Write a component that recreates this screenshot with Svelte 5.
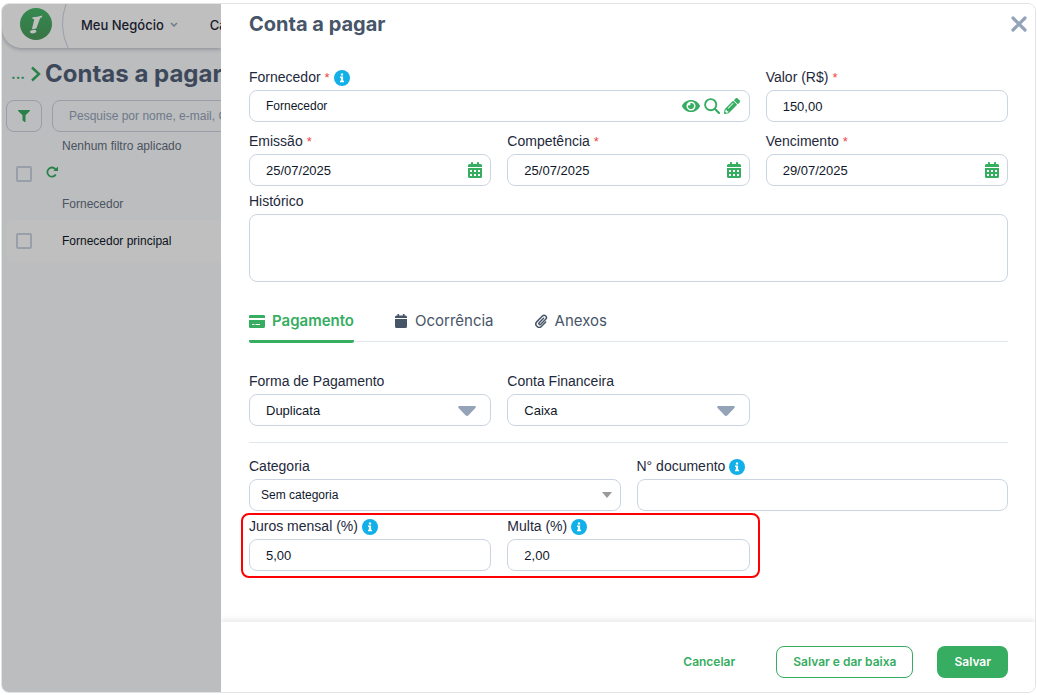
<script lang="ts">
  // Accounts payable: the list page sits dimmed on the left, the
  // edit drawer for one bill covers the rest.

  let supplier = $state('Fornecedor');
  let amount = $state('150,00');
  let history = $state('');
  let method = $state('Duplicata');
  let account = $state('Caixa');
  let category = $state('Sem categoria');
  let docNumber = $state('');
  let interest = $state('5,00');
  let fine = $state('2,00');

  let dates = $state([
    { id: 'issue', label: 'Emissão', value: '25/07/2025' },
    { id: 'accrual', label: 'Competência', value: '25/07/2025' },
    { id: 'due', label: 'Vencimento', value: '29/07/2025' },
  ]);

  const tabs = ['Pagamento', 'Ocorrência', 'Anexos'];
  let tab = $state('Pagamento');
</script>

{#snippet info()}
  <svg class="info" viewBox="0 0 16 16" aria-hidden="true">
    <circle cx="8" cy="8" r="8" fill="#12b0e8" />
    <path d="M6.9 3.4h2.2v2H6.9zM6 6.5h3.1v4.2H10v1.6H6v-1.6h.9V8.1H6z" fill="#fff" />
  </svg>
{/snippet}

{#snippet caret()}
  <svg class="caret" viewBox="0 0 18 10" aria-hidden="true">
    <path d="M1.5 0h15c1.200 0 1.700 1.200.9 2L10.500 9.200c-.9.9-2.100.9-3 0L.6 2C-.2 1.200.3 0 1.500 0z" fill="#94a3b8" />
  </svg>
{/snippet}

<div class="frame">
  <div class="page">
    <nav class="nav">
      <svg class="nav__logo" viewBox="0 0 32 32" aria-hidden="true">
        <defs>
          <linearGradient id="logo" x1="0" y1="0" x2="0" y2="1">
            <stop offset="0" stop-color="#46b96b" />
            <stop offset="1" stop-color="#4d9a5c" />
          </linearGradient>
        </defs>
        <circle cx="16" cy="16" r="16" fill="url(#logo)" />
        <path d="M12.500 9.300q4.500-.3 9.900-1.800l-.6 2-1.600.6-3.900 10.300-4.400.8 2.400-9.900-1.900-.6z" fill="#fff" />
        <ellipse cx="13.200" cy="23.600" rx="3.200" ry="1.700" fill="#fff" transform="rotate(-8 13.200 23.600)" />
      </svg>
      <svg class="nav__curve" viewBox="0 0 8 44" aria-hidden="true">
        <path d="M5 0Q-3 22 7 44" fill="none" stroke="#cbd5e1" />
      </svg>
      <a class="nav__link" href="#negocio">
        Meu Negócio
        <svg width="8" height="6" viewBox="0 0 8 6" aria-hidden="true">
          <path d="M1 1l3 3 3-3" fill="none" stroke="#94a3b8" stroke-width="1.500" />
        </svg>
      </a>
      <a class="nav__link" href="#cadastros">Cadastros</a>
    </nav>

    <div class="crumbs">
      <a class="crumbs__more" href="#inicio">...</a>
      <svg width="10" height="16" viewBox="0 0 10 16" aria-hidden="true">
        <path d="M1 1.500l7 6.500-7 6.500" fill="none" stroke="#36ad61" stroke-width="2.400" />
      </svg>
      <h1>Contas a pagar</h1>
    </div>

    <div class="search">
      <button type="button" class="search__filter" aria-label="Filtrar">
        <svg width="12" height="12" viewBox="0 0 512 512" aria-hidden="true">
          <path fill="currentColor" d="M487.976 0H24.028C2.710 0-8.047 25.866 7.058 40.971L192 225.941V432c0 7.831 3.821 15.170 10.237 19.662l80 55.980C298.020 518.690 320 507.493 320 487.980V225.941l184.947-184.970C520.021 25.896 509.338 0 487.976 0z" />
        </svg>
      </button>
      <input class="search__input" type="text" aria-label="Pesquisar" placeholder="Pesquise por nome, e-mail, CNPJ" />
    </div>
    <p class="filters">Nenhum filtro aplicado</p>

    <div class="tools">
      <input type="checkbox" aria-label="Selecionar todos" />
      <button type="button" class="tools__reload" aria-label="Atualizar">
        <svg width="12" height="12" viewBox="0 0 12 12" aria-hidden="true">
          <path d="M9.600 3.300A4.600 4.600 0 1 0 9.800 8.600" fill="none" stroke="currentColor" stroke-width="1.800" />
          <path d="M12 .4v4.700H7.300z" fill="currentColor" />
        </svg>
      </button>
    </div>
    <div class="list-head">Fornecedor</div>
    <div class="list-row">
      <input type="checkbox" id="row-1" />
      <label for="row-1">Fornecedor principal</label>
    </div>
  </div>

  <section class="drawer" aria-label="Conta a pagar">
    <header class="drawer__head">
      <h2>Conta a pagar</h2>
      <button type="button" class="close" aria-label="Fechar">
        <svg width="16" height="16" viewBox="0 0 16 16" aria-hidden="true">
          <path d="M2 2l12 12M14 2L2 14" stroke="#94a3b8" stroke-width="3.200" stroke-linecap="round" />
        </svg>
      </button>
    </header>

    <form class="form" onsubmit={(e) => e.preventDefault()}>
      <div class="grid">
        <div class="field field--wide">
          <label for="supplier">Fornecedor <em>*</em> {@render info()}</label>
          <div class="control control--small">
            <input id="supplier" type="text" bind:value={supplier} />
            <button type="button" class="icon" aria-label="Ver">
              <svg width="18" height="16" viewBox="0 0 576 512" aria-hidden="true">
                <path fill="currentColor" d="M572.520 241.400C518.290 135.590 410.930 64 288 64S57.680 135.640 3.480 241.410a32.350 32.350 0 0 0 0 29.190C57.710 376.410 165.070 448 288 448s230.320-71.640 284.520-177.410a32.350 32.350 0 0 0 0-29.190zM288 400a144 144 0 1 1 144-144 143.930 143.930 0 0 1-144 144zm0-240a95.310 95.310 0 0 0-25.310 3.790 47.850 47.850 0 0 1-66.900 66.900A95.780 95.780 0 1 0 288 160z" />
              </svg>
            </button>
            <button type="button" class="icon" aria-label="Procurar">
              <svg width="16" height="16" viewBox="0 0 16 16" aria-hidden="true">
                <path d="M10.800 10.800L15 15" stroke="currentColor" stroke-width="2.200" stroke-linecap="round" />
                <circle cx="6.700" cy="6.700" r="5.600" fill="none" stroke="currentColor" stroke-width="1.900" />
              </svg>
            </button>
            <button type="button" class="icon" aria-label="Editar">
              <svg width="16" height="16" viewBox="0 0 512 512" aria-hidden="true">
                <path fill="currentColor" d="M497.900 142.100l-46.100 46.100c-4.700 4.700-12.300 4.700-17 0l-111-111c-4.700-4.700-4.700-12.300 0-17l46.100-46.100c18.700-18.700 49.100-18.700 67.900 0l60.100 60.100c18.800 18.700 18.800 49.100 0 67.900zM284.200 99.800L21.600 362.400.4 483.900c-2.900 16.400 11.400 30.600 27.800 27.800l121.500-21.300 262.600-262.600c4.700-4.700 4.700-12.300 0-17l-111-111c-4.800-4.700-12.400-4.700-17.100 0zM124.100 339.900c-5.500-5.500-5.500-14.300 0-19.800l154-154c5.500-5.500 14.300-5.500 19.800 0s5.500 14.300 0 19.800l-154 154c-5.500 5.500-14.300 5.500-19.800 0zM88 424h48v36.300l-64.500 11.300-31.100-31.100L51.700 376H88v48z" />
              </svg>
            </button>
          </div>
        </div>
        <div class="field">
          <label for="amount">Valor (R$) <em>*</em></label>
          <div class="control"><input id="amount" type="text" bind:value={amount} /></div>
        </div>

        {#each dates as date (date.id)}
          <div class="field">
            <label for={date.id}>{date.label} <em>*</em></label>
            <div class="control">
              <input id={date.id} type="text" bind:value={date.value} />
              <button type="button" class="icon" aria-label="Abrir calendário">
                <svg width="14" height="16" viewBox="0 0 14 16" aria-hidden="true">
                  <path fill="currentColor" fill-rule="evenodd" d="M0 6h14v8.500Q14 16 12.500 16h-11Q0 16 0 14.500zM2 8v2h2V8zM6 8v2h2V8zM10 8v2h2V8zM2 12v2h2v-2zM6 12v2h2v-2zM10 12v2h2v-2zM3 .8Q3 0 3.800 0h.4Q5 0 5 .8V2h4V.8Q9 0 9.800 0h.4Q11 0 11 .8V2h1.500Q14 2 14 3.500V5H0V3.500Q0 2 1.500 2H3z" />
                </svg>
              </button>
            </div>
          </div>
        {/each}
      </div>

      <div class="field field--history">
        <label for="history">Histórico</label>
        <textarea id="history" bind:value={history}></textarea>
      </div>

      <div class="tabs" role="tablist">
        {#each tabs as name (name)}
          <button
            type="button"
            role="tab"
            class="tab"
            class:tab--active={tab === name}
            aria-selected={tab === name}
            onclick={() => (tab = name)}
          >
            {#if name === 'Pagamento'}
              <svg width="16" height="14" viewBox="0 0 16 14" aria-hidden="true">
                <path fill="currentColor" fill-rule="evenodd" d="M1.200 1h13.600Q16 1 16 2.200V4H0V2.200Q0 1 1.200 1zM0 6h16v6.300Q16 14 14.800 14H1.200Q0 14 0 12.800zM3 10v1h2.500v-1zM6.500 10v1H11v-1z" />
              </svg>
            {:else if name === 'Ocorrência'}
              <svg width="14" height="14" viewBox="0 0 14 14" aria-hidden="true">
                <path fill="currentColor" d="M1 5h12v7.500Q13 14 11.500 14h-9Q1 14 1 12.500zM3.500 0h1.600v1.500h3.800V0h1.600v1.500h1Q13 1.500 13 3v1H1V3q0-1.500 1.500-1.500h1z" />
              </svg>
            {:else}
              <svg width="14" height="14" viewBox="0 0 14 14" aria-hidden="true">
                <path
                  d="M9.600 4.200L5.200 8.700a1.100 1.100 0 0 0 1.600 1.600l4.900-5A2.300 2.300 0 0 0 8.400 2L2.900 7.600a3.300 3.300 0 0 0 4.700 4.700l4.100-4.200"
                  fill="none"
                  stroke="currentColor"
                  stroke-width="1.500"
                  stroke-linecap="round"
                />
              </svg>
            {/if}
            {name}
          </button>
        {/each}
      </div>

      <div class="grid grid--payment">
        <div class="field">
          <label for="method">Forma de Pagamento</label>
          <div class="select">
            <select id="method" bind:value={method}>
              <option>Duplicata</option>
            </select>
            {@render caret()}
          </div>
        </div>
        <div class="field">
          <label for="account">Conta Financeira</label>
          <div class="select">
            <select id="account" bind:value={account}>
              <option>Caixa</option>
            </select>
            {@render caret()}
          </div>
        </div>
      </div>

      <hr />

      <div class="grid grid--halves">
        <div class="field">
          <label for="category">Categoria</label>
          <div class="select select--small">
            <select id="category" bind:value={category}>
              <option>Sem categoria</option>
            </select>
            <svg class="caret" viewBox="0 0 10 6" aria-hidden="true">
              <path d="M0 0h10L5 6z" fill="#999" />
            </svg>
          </div>
        </div>
        <div class="field">
          <label for="document">N° documento {@render info()}</label>
          <div class="control"><input id="document" type="text" bind:value={docNumber} /></div>
        </div>
      </div>

      <div class="grid grid--charges">
        <div class="charges">
          <div class="field">
            <label for="interest">Juros mensal (%) {@render info()}</label>
            <div class="control"><input id="interest" type="text" bind:value={interest} /></div>
          </div>
          <div class="field">
            <label for="fine">Multa (%) {@render info()}</label>
            <div class="control"><input id="fine" type="text" bind:value={fine} /></div>
          </div>
        </div>
      </div>
    </form>

    <footer class="drawer__foot">
      <button type="button" class="btn btn--text">Cancelar</button>
      <button type="button" class="btn btn--outline">Salvar e dar baixa</button>
      <button type="button" class="btn btn--solid">Salvar</button>
    </footer>
  </section>
</div>

<style>
  :global(body) {
    background: #fff;
  }

  .frame {
    --green: #36ad61;
    --line: #cbd5e1;
    --slate: #475569;
    --display: Inter, 'Open Sans', sans-serif;
    display: flex;
    box-sizing: border-box;
    min-height: calc(100vh - 5px);
    margin: 3px 1px 2px;
    border: 1px solid #e2e3e4;
    border-radius: 8px;
    overflow: hidden;
    font-family: 'Liberation Sans', Arial, sans-serif;
    font-size: 12px;
    color: #0f172a;
  }

  button,
  input,
  select,
  textarea {
    box-sizing: border-box;
    margin: 0;
    font: inherit;
    color: inherit;
  }
  button {
    padding: 0;
    background: none;
    border: 0;
    cursor: pointer;
  }
  svg {
    flex: none;
    display: block;
  }

  .page {
    position: relative;
    flex: none;
    width: 219px;
    overflow: hidden;
    background: #fafcff;
  }
  /* backdrop over the list page */
  .page::after {
    content: '';
    position: absolute;
    inset: 0;
    background: rgba(0, 0, 0, 0.25);
  }

  .nav {
    display: flex;
    align-items: center;
    height: 44px;
    padding-left: 18px;
    background: #fff;
    border-bottom-left-radius: 20px;
    box-shadow: 0 1px 4px rgba(15, 23, 42, 0.3);
  }
  .nav__logo {
    width: 32px;
    height: 32px;
    margin-top: -4px;
  }
  .nav__curve {
    width: 8px;
    height: 44px;
    margin: 0 12px 0 9px;
  }
  .nav__link {
    display: flex;
    align-items: center;
    gap: 6px;
    margin: -3px 32px 0 0;
    font: 500 13px/20px var(--display);
    color: #1e293b;
    text-decoration: none;
    white-space: nowrap;
  }

  .crumbs {
    display: flex;
    align-items: center;
    gap: 4px;
    height: 52px;
    padding-left: 9px;
    white-space: nowrap;
  }
  .crumbs__more {
    margin-right: 2px;
    font: 700 14px/20px var(--display);
    color: var(--green);
    text-decoration: none;
  }
  h1 {
    margin: 0;
    font: 700 24px/32px var(--display);
    color: #52627a;
  }

  .search {
    display: flex;
    gap: 10px;
    padding-left: 4px;
  }
  .search__filter {
    display: grid;
    flex: none;
    place-items: center;
    width: 36px;
    height: 32px;
    color: var(--green);
    border: 1px solid #cbd5e1;
    border-radius: 8px;
  }
  .search__input {
    flex: none;
    width: 320px;
    height: 32px;
    padding: 0 16px;
    background: none;
    border: 1px solid #cbd5e1;
    border-radius: 8px;
  }
  .search__input::placeholder {
    color: #94a3b8;
    opacity: 1;
  }
  .filters {
    margin: 0 0 0 60px;
    line-height: 28px;
    color: #667080;
  }

  .tools {
    display: flex;
    align-items: center;
    gap: 14px;
    height: 28px;
    padding-left: 14px;
  }
  .tools__reload {
    padding-bottom: 4px;
    color: var(--green);
  }
  input[type='checkbox'] {
    appearance: none;
    width: 16px;
    height: 16px;
    border: 2px solid #cbd5e1;
    border-radius: 2px;
  }
  .list-head {
    padding-left: 60px;
    line-height: 32px;
    color: #667080;
  }
  .list-row {
    display: flex;
    align-items: center;
    gap: 30px;
    height: 42px;
    margin-left: 4px;
    padding-left: 10px;
    background: #fff;
    border-radius: 8px 0 0 8px;
  }

  .drawer {
    display: flex;
    flex: 1;
    flex-direction: column;
    min-width: 0;
    background: #fff;
  }
  .drawer__head {
    display: flex;
    align-items: center;
    justify-content: space-between;
    height: 40px;
    padding: 0 8px 0 28px;
  }
  h2 {
    margin: 0;
    font: 700 20px/32px var(--display);
    color: var(--slate);
  }

  .form {
    flex: 1;
    padding: 22px 27px 24px 28px;
  }
  .grid {
    display: grid;
    grid-template-columns: repeat(3, 1fr);
    gap: 8px 16px;
  }
  .field {
    min-width: 0;
  }
  .field--wide {
    grid-column: span 2;
  }
  .field--history {
    padding-top: 4px;
  }
  .field label {
    display: flex;
    align-items: center;
    gap: 4px;
    box-sizing: border-box;
    height: 24px;
    padding-bottom: 2px;
    font-size: 14px;
    color: #1e293b;
  }
  .field em {
    font-style: normal;
    font-size: 13px;
    color: #ef4444;
  }
  .info {
    width: 16px;
    height: 16px;
    margin-top: 2px;
  }

  .control {
    display: flex;
    align-items: center;
    gap: 4px;
    box-sizing: border-box;
    height: 32px;
    padding: 0 8px 0 16px;
    border: 1px solid var(--line);
    border-radius: 8px;
    font-size: 13px;
  }
  .control--small {
    padding-right: 9px;
    font-size: 12px;
  }
  .control input {
    flex: 1;
    min-width: 0;
    height: 100%;
    padding: 0;
    background: none;
    border: 0;
    outline: 0;
  }
  .icon {
    color: var(--green);
  }

  textarea {
    display: block;
    width: 100%;
    height: 68px;
    padding: 8px 16px;
    border: 1px solid var(--line);
    border-radius: 8px;
    resize: none;
  }

  .select {
    display: grid;
    align-items: center;
    font-size: 13px;
  }
  .select select {
    grid-area: 1 / 1;
    width: 100%;
    height: 32px;
    padding: 0 16px;
    appearance: none;
    background: #fff;
    border: 1px solid var(--line);
    border-radius: 8px;
  }
  .select .caret {
    grid-area: 1 / 1;
    justify-self: end;
    width: 18px;
    height: 10px;
    margin: 1px 15px 0 0;
    pointer-events: none;
  }
  .select--small {
    font-size: 12px;
  }
  .select--small select {
    padding: 0 11px;
  }
  .select--small .caret {
    width: 10px;
    height: 6px;
    margin: 0 9px 0 0;
  }

  .tabs {
    display: flex;
    gap: 40px;
    margin-top: 20px;
    border-bottom: 1px solid #e2e8f0;
  }
  .tab {
    display: flex;
    align-items: center;
    gap: 7px;
    height: 41px;
    margin-bottom: -2px;
    border-bottom: 3px solid transparent;
    border-radius: 2px;
    font: 400 15px/20px var(--display);
    color: var(--slate);
  }
  .tab--active {
    font-weight: 600;
    color: var(--green);
    border-bottom-color: var(--green);
  }

  .grid--payment {
    margin-top: 28px;
  }
  hr {
    height: 1px;
    margin: 16px 0 12px;
    background: #e2e8f0;
    border: 0;
  }
  .grid--halves {
    grid-template-columns: repeat(2, 1fr);
  }
  .grid--charges {
    margin-top: 4px;
  }
  .charges {
    position: relative;
    display: grid;
    grid-column: span 2;
    grid-template-columns: subgrid;
  }
  .charges::after {
    content: '';
    position: absolute;
    inset: -2px -10px -7px -8px;
    border: 2px solid #f00;
    border-radius: 8px;
    pointer-events: none;
  }

  .drawer__foot {
    display: flex;
    align-items: center;
    justify-content: flex-end;
    gap: 24px;
    height: 70px;
    padding: 9px 27px 0 0;
    box-sizing: border-box;
    box-shadow: 0 -2px 6px rgba(0, 0, 0, 0.1);
  }
  .btn {
    height: 32px;
    padding: 0 16px;
    border: 1px solid transparent;
    border-radius: 8px;
    font: 600 12px/20px var(--display);
    color: var(--green);
  }
  .btn--outline {
    border-color: var(--green);
  }
  .btn--solid {
    color: #fff;
    background: var(--green);
  }
</style>
